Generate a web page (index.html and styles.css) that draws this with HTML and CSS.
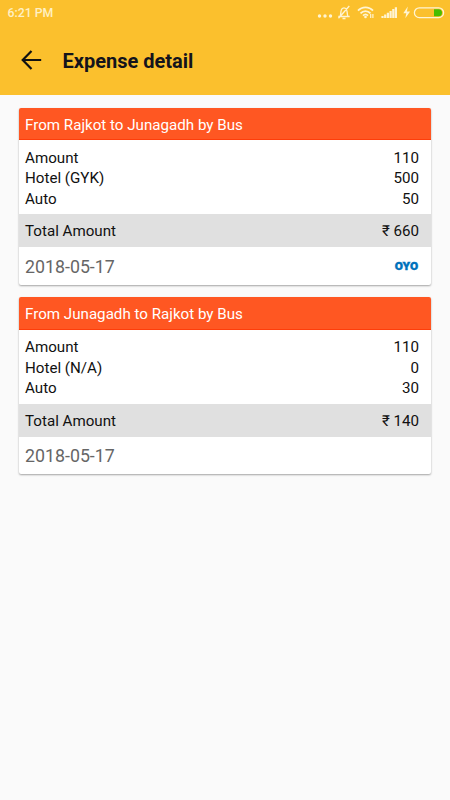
FILE: index.html
```html
<!DOCTYPE html>
<html lang="en">
<head>
    <meta charset="UTF-8">
    <meta name="viewport" content="width=device-width, initial-scale=1.0">
    <title>Expense detail</title>
    <link rel="stylesheet" href="styles.css">
</head>
<body>
    <header class="app-header">
        <div class="status-bar">
            <span>6:21 PM</span>
            <svg class="status-icons" width="130" height="18" viewBox="0 0 130 18" fill="none" stroke="#fff4d2">
                <!-- More dots -->
                <g fill="#fff4d2" stroke="none">
                    <circle cx="3.5" cy="12" r="1.7"/>
                    <circle cx="9" cy="12" r="1.7"/>
                    <circle cx="14.5" cy="12" r="1.7"/>
                </g>
                <!-- Muted bell -->
                <path d="M22.300 12.500h11.400M24 12.500c1-1.500 .6-4.500 1.200-6.300 .9-3 4.700-3 5.600 0 .6 1.800 .2 4.800 1.200 6.300M26.500 14.500h3M33.300 2L22.500 14.300" stroke-width="1.300"/>
                <!-- Wifi -->
                <path d="M42 6.700c4-4.500 11-4.500 15 0M44.500 9.300c2.800-3 7.200-3 10 0M47 11.600c1.500-1.500 3.500-1.500 5 0" stroke-width="1.800"/>
                <circle cx="49.5" cy="13" r="1.300" fill="#fff4d2" stroke="none"/>
                <path d="M54.700 10v4M56.900 10v4" stroke-width="1.200"/>
                <!-- Signal -->
                <path d="M66.500 14v-2M69.200 14v-3.500M71.900 14v-5.200M74.600 14v-7M77.300 14v-9M79.900 14v-10.700" stroke-width="2.200"/>
                <!-- Charging battery -->
                <path d="M91.800 2.500l-4.500 6.700h3l-1 5 4.800-6.700h-3.200z" fill="#fff4d2" stroke="none"/>
                <rect x="98.400" y="3.800" width="29.200" height="9.800" rx="4.900" stroke-width="1.300"/>
                <path d="M118 5.200h4.500a3.500 3.500 0 0 1 0 7H118z" fill="#48bd00" stroke="none"/>
            </svg>
        </div>
        <div class="toolbar">
            <svg class="back-icon" width="22" height="22" viewBox="0 0 22 22" fill="none" stroke="#111" stroke-width="2.2">
                <path d="M11.500 2L2.700 11l8.800 9M3 11h18.200"/>
            </svg>
            <h1>Expense detail</h1>
        </div>
    </header>

    <main class="expense-list">
        <section class="card">
            <h2 class="card-title">From Rajkot to Junagadh by Bus</h2>
            <div class="card-rows">
                <div class="row"><span>Amount</span><span>110</span></div>
                <div class="row"><span>Hotel (GYK)</span><span>500</span></div>
                <div class="row"><span>Auto</span><span>50</span></div>
            </div>
            <div class="row total"><span>Total Amount</span><span>₹ 660</span></div>
            <div class="card-footer">
                <span>2018-05-17</span>
                <svg class="oyo" width="25" height="10" viewBox="0 0 25 10">
                    <text x="0.7" y="8.700" textLength="23.4" lengthAdjust="spacingAndGlyphs">OYO</text>
                </svg>
            </div>
        </section>

        <section class="card">
            <h2 class="card-title">From Junagadh to Rajkot by Bus</h2>
            <div class="card-rows">
                <div class="row"><span>Amount</span><span>110</span></div>
                <div class="row"><span>Hotel (N/A)</span><span>0</span></div>
                <div class="row"><span>Auto</span><span>30</span></div>
            </div>
            <div class="row total"><span>Total Amount</span><span>₹ 140</span></div>
            <div class="card-footer"><span>2018-05-17</span></div>
        </section>
    </main>
</body>
</html>
```
FILE: styles.css
```css
* {
    box-sizing: border-box;
}

body {
    margin: 0;
    min-height: 100vh;
    font-family: Roboto, sans-serif;
    background-color: #fafafa;
    color: #111;
}

.app-header {
    height: 95px;
    background-color: #fbc02d;
}

.status-bar {
    display: flex;
    justify-content: space-between;
    height: 25px;
    padding: 4px 4px 0 7.5px;
    font-size: 12.3px;
    line-height: 18px;
    font-weight: 500;
    color: #fff0c4;
}

.toolbar {
    display: flex;
    align-items: center;
    gap: 20.5px;
    height: 70px;
    padding-left: 20px;
}

.toolbar h1 {
    margin: 0;
    padding-top: 1px;
    font-size: 20px;
    font-weight: 700;
    line-height: 24px;
    color: #14141c;
}

.expense-list {
    display: flex;
    flex-direction: column;
    gap: 12.4px;
    padding: 12.6px 18.6px 12.6px 18.5px;
}

.card {
    background-color: #fff;
    border-radius: 2px;
    overflow: hidden;
    box-shadow: 0 1px 2px rgba(0, 0, 0, 0.35);
}

.card-title {
    margin: 0;
    height: 32.8px;
    padding: 0 6.5px;
    font-size: 15.15px;
    font-weight: 400;
    line-height: 35px;
    color: #fff;
    background-color: #ff5722;
    border-bottom: 1px solid #ff3d0a;
}

.card-rows {
    height: 74px;
    padding-top: 7.5px;
}

.row {
    display: flex;
    justify-content: space-between;
    padding: 0 12.4px 0 6.5px;
    font-size: 15.15px;
    line-height: 20.5px;
}

.total {
    height: 32.7px;
    line-height: 34px;
    background-color: #e0e0e0;
}

.card-footer {
    display: flex;
    justify-content: space-between;
    align-items: center;
    height: 37.7px;
    padding: 1px 12.4px 0 6.5px;
    font-size: 17.8px;
    line-height: 39px;
    color: #666;
}

.oyo text {
    font-family: Inter, sans-serif;
    font-size: 9.8px;
    font-weight: 900;
    fill: #0072bc;
    stroke: #0072bc;
    stroke-width: 0.3px;
}
```
